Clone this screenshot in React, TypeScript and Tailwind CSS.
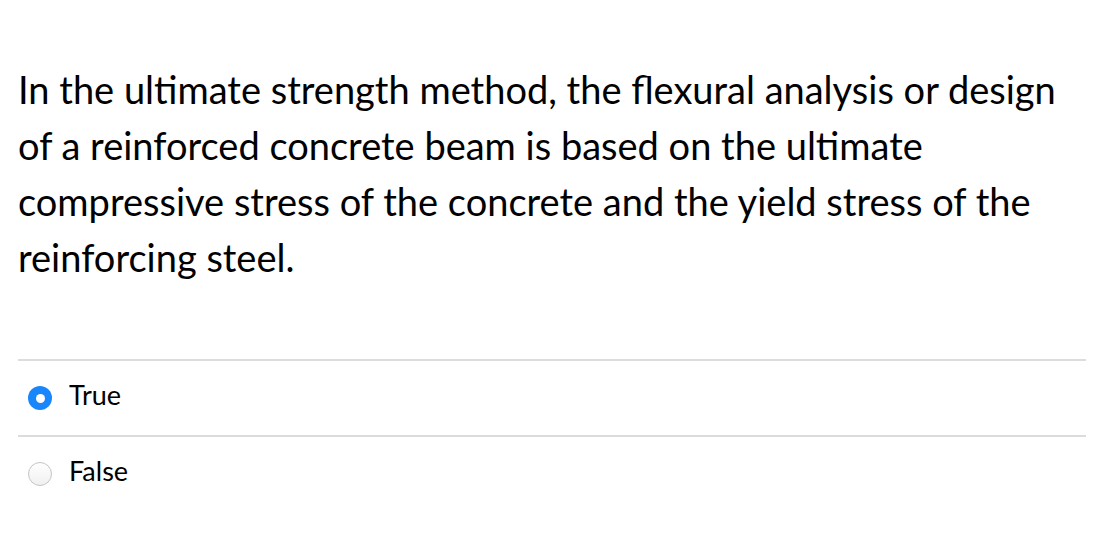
import React from 'react';

const options = [
  { label: 'True', checked: true },
  { label: 'False', checked: false },
];

function Radio({ checked }: { checked: boolean }) {
  if (checked) {
    return (
      <span className="flex h-[24px] w-[24px] items-center justify-center rounded-full bg-[#1a86fb]">
        <span className="h-[9px] w-[9px] rounded-full bg-white" />
      </span>
    );
  }
  return (
    <span className="h-[24px] w-[24px] rounded-full border border-[#c4c4c4] bg-gradient-to-b from-white to-[#f0f0f0]" />
  );
}

export default function App() {
  return (
    <div className="min-h-screen bg-white font-['Lato','Liberation_Sans',sans-serif] text-black">
      <div className="w-[1086px] pl-[18px] pt-[61px]">
        <p className="text-[38px] leading-[56px]">
          In the ultimate strength method, the flexural analysis or design of a reinforced concrete beam is based on the ultimate compressive stress of the concrete and the yield stress of the reinforcing steel.
        </p>

        <div className="mt-[74px]">
          {options.map((o) => (
            <div key={o.label} className="flex h-[76px] items-center gap-[17px] border-t-2 border-[#dcdcdc] pl-[10px]">
              <Radio checked={o.checked} />
              <span className="mb-[6px] text-[27px]">{o.label}</span>
            </div>
          ))}
        </div>
      </div>
    </div>
  );
}
